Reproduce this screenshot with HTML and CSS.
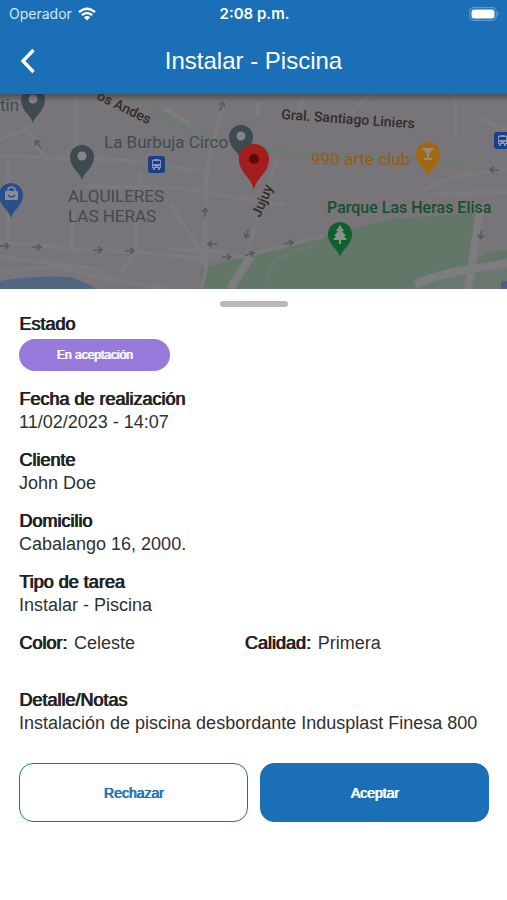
FILE: index.html
```html
<!DOCTYPE html>
<html lang="es">
  <head>
    <meta charset="UTF-8" />
    <meta name="viewport" content="width=device-width, initial-scale=1.0" />
    <title>Instalar - Piscina</title>
    <link rel="stylesheet" href="styles.css">
  </head>
  <body>
    <header class="top">
      <div class="status-bar">
        <div class="carrier">
          <span>Operador</span>
          <svg class="wifi" viewBox="0 0 18 14" aria-hidden="true">
            <g fill="none" stroke="#fff" stroke-width="2.3">
              <path d="M1 5.2Q9-1.8 17 5.2" />
              <path d="M3.8 8.2Q9 3.7 14.2 8.2" />
            </g>
            <path fill="#fff" d="M5.8 10.2Q9 7.6 12.2 10.2L9 13.5z" />
          </svg>
        </div>
        <time class="clock">2:08 p.m.</time>
        <svg class="battery" viewBox="0 0 31 14" aria-hidden="true">
          <rect x=".7" y=".7" width="26.6" height="12.6" rx="4" fill="none" stroke="#5d9acd" stroke-width="1.2" />
          <rect x="2.5" y="2.5" width="23" height="9" rx="2.5" fill="#fff" />
          <path d="M28.7 4.8q2.2 2.2 0 4.4z" fill="#79acd8" />
        </svg>
      </div>
      <div class="title-bar">
        <a href="#volver" class="back" aria-label="Volver">
          <svg viewBox="0 0 16 26" aria-hidden="true">
            <path d="M13.500 2L3 13l10.500 11" fill="none" stroke="#fff" stroke-width="3.400" />
          </svg>
        </a>
        <h1>Instalar - Piscina</h1>
      </div>
    </header>

    <main>
      <svg class="map" viewBox="0 0 507 195" preserveAspectRatio="xMidYMid slice" role="img" aria-label="Mapa del domicilio">
        <defs>
          <linearGradient id="shade" x1="0" y1="0" x2="0" y2="1">
            <stop offset="0" stop-color="#222" stop-opacity=".45" />
            <stop offset="1" stop-color="#222" stop-opacity="0" />
          </linearGradient>
          <path id="pin" d="M0 24C-2 16-12 12-12 1A12 12 0 1 1 12 1C12 12 2 16 0 24z" />
          <path id="arrow" d="M-5 0H4M0-3L4 0L0 3" fill="none" stroke="#5a5a5e" stroke-width="1.600" />
        </defs>
        <rect width="507" height="195" fill="#777579" />

        <!-- parks and water -->
        <path d="M201 195V175L245 162L325 142L390 125L480 119L470 175Q440 177 410 195z" fill="#637769" />
        <path d="M477 166Q485 155 507 156V170Q490 174 477 172z" fill="#637769" />
        <path d="M415 195Q450 178 507 176V195z" fill="#6a776e" />
        <path d="M0 187Q35 181 70 183Q88 189 96 195H0z" fill="#526682" />
        <path d="M501 187h6v8h-6z" fill="#535c91" />
        <g fill="none" stroke="#6d7a73" stroke-width="5">
          <path d="M130 0Q155 19 170 28Q215 47 260 55Q295 62 360 62L475 70" />
        </g>

        <!-- streets -->
        <g fill="none" stroke="#7b7a7d" stroke-width="4">
          <path d="M77 0L76 64M8 155V65M0 62L125 66L210 78M88 92L180 94L250 106M28 36L44 64" />
          <path d="M0 46L30 33M74 118L71 155M137 124L136 155L122 178M141 78L138 105" />
          <path d="M0 148L75 155L135 158L200 164L245 162L325 142" />
          <path d="M226 5L212 50L206 78L206 175L201 195M207 80L202 170" />
          <path d="M258 8V22M277 65L260 117L246 162M170 110L200 155M250 106L285 111" />
          <path d="M0 163L90 174L120 187L170 195M0 177L60 173L115 188" />
          <path d="M305 0L298 16M352 20L370 0M455 0V45M480 25L507 35" />
          <path d="M425 95Q450 81 507 75M430 100L507 98M170 155L225 158" />
        </g>
        <g fill="none" stroke="#7d7d7f">
          <path d="M165 14L190 30" stroke-width="5" />
          <path d="M251 162L230 195M481 110L468 195" stroke-width="8" />
          <path d="M415 190Q440 180 460 177T507 169" stroke-width="8" />
          <path d="M265 195L274 166L312 152L307 145" stroke="#6b7a71" stroke-width="2" />
        </g>

        <!-- traffic direction -->
        <use href="#arrow" transform="translate(5 152)" />
        <use href="#arrow" transform="translate(37 153)" />
        <use href="#arrow" transform="translate(98 156)" />
        <use href="#arrow" transform="translate(130 157)" />
        <use href="#arrow" transform="translate(227 163)" />
        <use href="#arrow" transform="translate(250 160) rotate(-17)" />
        <use href="#arrow" transform="translate(289 149) rotate(-10)" />
        <use href="#arrow" transform="translate(212 150) rotate(180)" />
        <use href="#arrow" transform="translate(205 118) rotate(-90)" />
        <use href="#arrow" transform="translate(247 140) rotate(108)" />
        <use href="#arrow" transform="translate(222 12) rotate(-65)" />
        <use href="#arrow" transform="translate(38 50) rotate(-125)" />
        <use href="#arrow" transform="translate(494 76) rotate(180)" />
        <use href="#arrow" transform="translate(481 141) rotate(98)" />

        <!-- street names -->
        <g class="street">
          <text x="96" y="5" transform="rotate(26 96 5)">os Andes</text>
          <text x="281" y="25" transform="rotate(4 281 25)">Gral. Santiago Liniers</text>
          <text x="260" y="124" transform="rotate(-67 260 124)">Jujuy</text>
        </g>

        <!-- places -->
        <g class="place">
          <text x="0" y="17">tin</text>
          <text x="104" y="54">La Burbuja Circo</text>
          <text x="68" y="108">ALQUILERES</text>
          <text x="68" y="128">LAS HERAS</text>
          <text x="311" y="71" class="club">990 arte club</text>
          <text x="327" y="119" class="park">Parque Las Heras Elisa</text>
        </g>

        <g fill="#3d4b50">
          <use href="#pin" x="33" y="5" />
          <use href="#pin" x="82" y="62" />
          <use href="#pin" x="241" y="42" />
        </g>
        <g fill="#858486">
          <circle cx="33" cy="5" r="4.500" />
          <circle cx="82" cy="62" r="4.500" />
          <circle cx="241" cy="42" r="4.500" />
        </g>

        <use href="#pin" x="11" y="100" fill="#294f8b" />
        <rect x="5" y="97" width="13" height="9" rx="1" fill="#8b8d94" />
        <path d="M8 97v-2q3.500-4 7 0v2" fill="none" stroke="#8b8d94" stroke-width="1.500" />
        <path d="M8 101q3.500 4 7 0" fill="none" stroke="#294f8b" stroke-width="1.400" />

        <use href="#pin" x="428" y="59" fill="#a16810" />
        <path d="M422 54h12l-5 6v4h3v2h-8v-2h3v-4z" fill="#8f8c85" />

        <use href="#pin" x="340" y="139" fill="#10602d" />
        <path d="M340 131l4 6h-2l4 5h-2l3 4h-6v4h-2v-4h-6l3-4h-2l4-5h-2z" fill="#83928a" />

        <g id="bus">
          <rect x="148" y="62" width="17" height="17" rx="3" fill="#173f8c" />
          <path d="M152 66q4-2 9 0v8h-1v2h-2v-2h-3v2h-2v-2h-1z" fill="#8795b3" />
          <path d="M153 67h7v3h-7zM153 72h2v1h-2zM158 72h2v1h-2z" fill="#173f8c" />
        </g>
        <use href="#bus" x="346" y="-24" />

        <!-- selected address -->
        <path d="M254 97C253 84 239 80 239 65A15 15 0 0 1 269 65C269 80 255 84 254 97z" fill="#a31d1d" />
        <circle cx="254" cy="65" r="5" fill="#5d0a0a" />
        <rect width="507" height="8" fill="url(#shade)" />
      </svg>

      <section class="sheet">
        <div class="handle"></div>

        <div class="field state">
          <h2>Estado</h2>
          <span class="badge">En aceptación</span>
        </div>
        <div class="field">
          <h2>Fecha de realización</h2>
          <p>11/02/2023 - 14:07</p>
        </div>
        <div class="field">
          <h2>Cliente</h2>
          <p>John Doe</p>
        </div>
        <div class="field">
          <h2>Domicilio</h2>
          <p>Cabalango 16, 2000.</p>
        </div>
        <div class="field">
          <h2>Tipo de tarea</h2>
          <p>Instalar - Piscina</p>
        </div>
        <div class="specs">
          <div class="spec">
            <h2>Color:</h2>
            <p>Celeste</p>
          </div>
          <div class="spec">
            <h2>Calidad:</h2>
            <p>Primera</p>
          </div>
        </div>
        <div class="field">
          <h2>Detalle/Notas</h2>
          <p>Instalación de piscina desbordante Indusplast Finesa 800</p>
        </div>

        <div class="actions">
          <button type="button" class="btn reject">Rechazar</button>
          <button type="button" class="btn accept">Aceptar</button>
        </div>
      </section>
    </main>
  </body>
</html>
```

FILE: styles.css
```css
* {
  box-sizing: border-box;
}
body {
  margin: 0;
  font-family: "Liberation Sans", Arial, sans-serif;
  font-size: 18px;
  line-height: 23px;
  color: #303030;
  background: #fff;
}
h1,
h2,
p {
  margin: 0;
}

/* header */
.top {
  background: #1a6fb7;
  color: #fff;
}
.status-bar {
  display: grid;
  grid-template-columns: 1fr auto 1fr;
  align-items: center;
  height: 27px;
  padding: 0 7px 0 9px;
  font-family: Inter, sans-serif;
  font-size: 14px;
}
.carrier {
  display: flex;
  align-items: center;
  gap: 6px;
  color: #d5e6f5;
}
.wifi {
  width: 18px;
  height: 14px;
}
.clock {
  font-size: 15px;
  font-weight: 600;
}
.battery {
  width: 31px;
  height: 14px;
  justify-self: end;
}
.title-bar {
  display: grid;
  grid-template-columns: 40px 1fr 40px;
  align-items: center;
  height: 67px;
  padding: 0 8px;
}
.back {
  display: flex;
  justify-content: center;
}
.back svg {
  width: 16px;
  height: 26px;
}
.title-bar h1 {
  font-size: 24px;
  font-weight: normal;
  text-align: center;
}

/* map */
.map {
  display: block;
  width: 100%;
  height: 195px;
}
.street {
  font-family: Roboto, sans-serif;
  font-size: 14px;
  font-weight: 500;
  fill: #332b2b;
}
.place {
  font-family: Roboto, sans-serif;
  font-size: 17px;
  fill: #414b4f;
}
.club {
  fill: #965b12;
}
.park {
  font-size: 16px;
  font-weight: 500;
  fill: #174f2b;
}

/* detail sheet */
.sheet {
  display: flex;
  flex-direction: column;
  padding: 12px 18px 24px 19px;
}
.handle {
  width: 68px;
  height: 6px;
  margin-bottom: 6px;
  align-self: center;
  border-radius: 3px;
  background: #b9b9b9;
}
.field {
  margin-bottom: 15px;
}
.sheet h2 {
  font-size: 18px;
  font-weight: normal;
  color: #202020;
  text-shadow: 1px 0 0 currentColor;
}
.state {
  margin-bottom: 17px;
}
.state h2 {
  margin-bottom: 3px;
}
.badge {
  display: block;
  width: 151px;
  border-radius: 16px;
  background: #9879dc;
  color: #fff;
  font-size: 12px;
  line-height: 32px;
  text-align: center;
  text-shadow: 1px 0 0 currentColor;
}
.specs {
  display: flex;
  margin-bottom: 34px;
}
.spec {
  display: flex;
  gap: 7px;
  flex-basis: 48%;
}
.actions {
  display: flex;
  gap: 12px;
  margin-top: 13px;
}
.btn {
  flex: 1;
  height: 59px;
  border: 1px solid #1a6fb7;
  border-radius: 14px;
  font-family: inherit;
  font-size: 14px;
  text-shadow: 1px 0 0 currentColor;
  cursor: pointer;
}
.reject {
  background: #fff;
  color: #1a6fb7;
}
.accept {
  background: #1a6fb7;
  color: #fff;
}
```
